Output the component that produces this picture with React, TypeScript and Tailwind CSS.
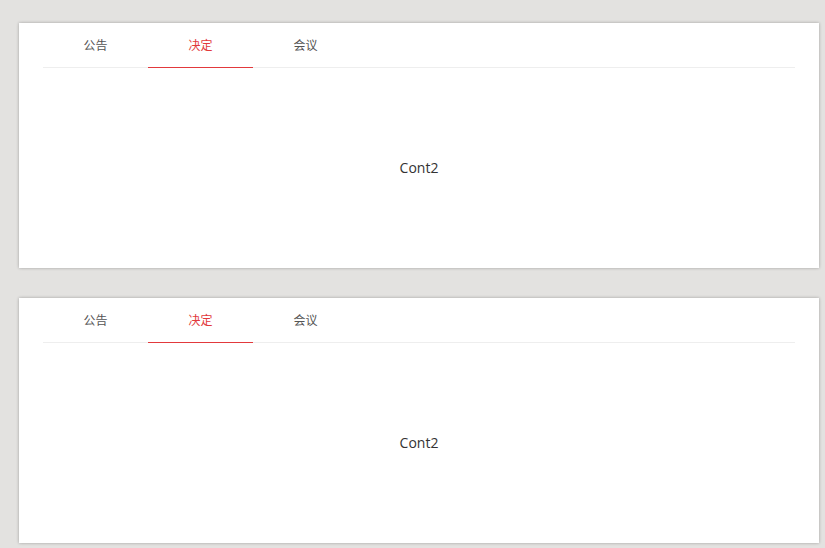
import React from "react";

function Card() {
  const tabs = ["公告", "决定", "会议"];
  return (
    <div className="w-[800px] h-[245px] bg-white shadow-[0_0_3px_rgba(0,0,0,0.3)] flex flex-col">
      <div className="mx-[24px] h-[45px] flex border-b border-[#eeeeee]">
        {tabs.map((t, i) => (
          <div
            key={t}
            className={
              i === 1
                ? "w-[105px] pt-[2px] flex items-center justify-center text-[12px] text-[#e2393c] border-b border-[#e2393c] -mb-px"
                : "w-[105px] pt-[2px] flex items-center justify-center text-[12px] text-[#555555]"
            }
          >
            {t}
          </div>
        ))}
      </div>
      <div className="flex-1 pb-[2px] flex items-center justify-center text-[14px] text-[#333333]">
        Cont2
      </div>
    </div>
  );
}

export default function App() {
  return (
    <div
      className="w-[825px] h-[548px] bg-[#e3e2e0] pt-[23px] pl-[19px] flex flex-col gap-[30px]"
      style={{ fontFamily: '"Open Sans", "Noto Sans CJK SC", sans-serif' }}
    >
      <Card />
      <Card />
    </div>
  );
}
